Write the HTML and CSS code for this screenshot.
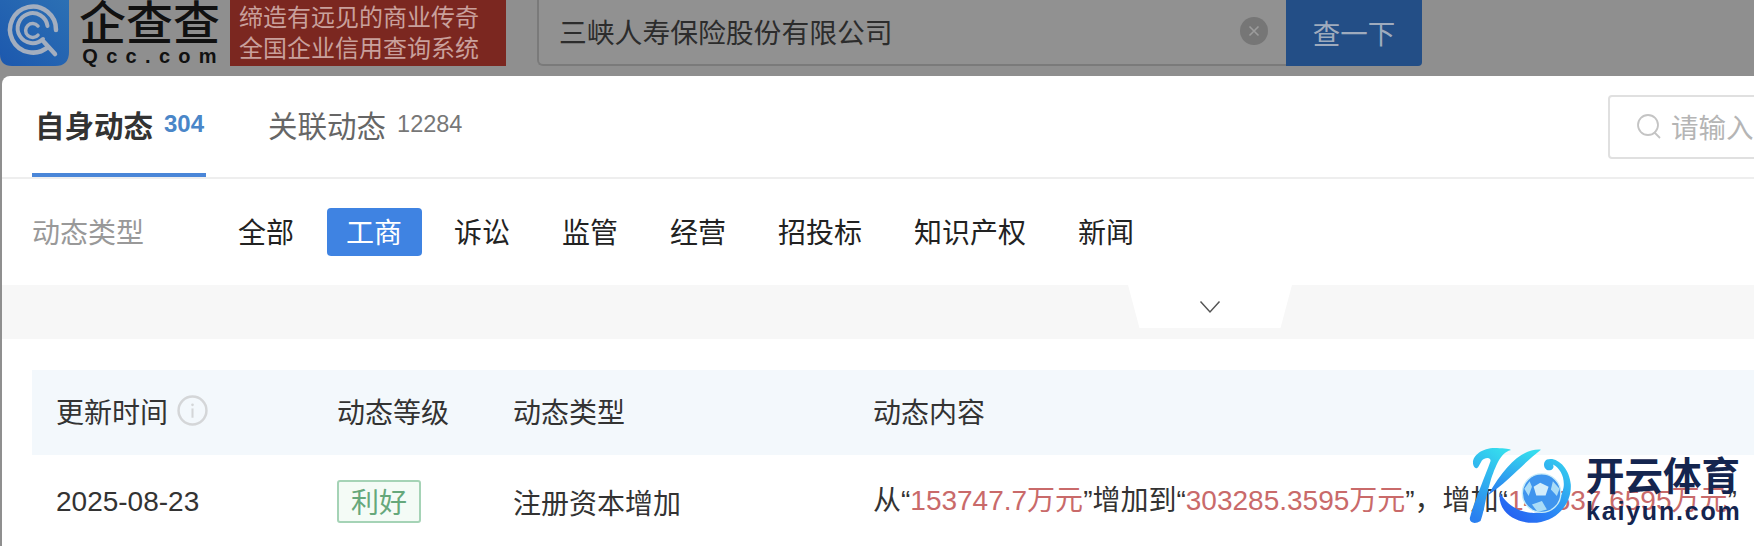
FILE: index.html
```html
<!DOCTYPE html>
<html lang="zh-CN">
<head>
<meta charset="utf-8">
<title>三峡人寿保险股份有限公司</title>
<link rel="stylesheet" href="styles.css">
</head>
<body>
<header class="topbar">
  <svg class="logo-icon" viewBox="0 0 69 66" aria-hidden="true">
    <defs><linearGradient id="lg" x1="0" y1="1" x2="1" y2="0"><stop offset="0" stop-color="#1c58ae"/><stop offset="1" stop-color="#2c70b4"/></linearGradient></defs>
    <path d="M0 0H69V52Q69 66 55 66H12Q0 66 0 54Z" fill="url(#lg)"/>
    <g fill="none" stroke="#a3aebf" stroke-linecap="round">
      <path d="M48 47A23 23 0 1 1 56 30" stroke-width="4.5"/>
      <path d="M43 39A15 15 0 1 1 47.500 26" stroke-width="4"/>
      <path d="M38 26A7 7 0 1 0 38 35" stroke-width="3.500"/>
      <path d="M44 42L55 54" stroke-width="4.500"/>
    </g>
  </svg>
  <div class="logo-text">
    <span class="logo-cn">企查查</span>
    <span class="logo-en">Qcc.com</span>
  </div>
  <div class="banner">
    <span>缔造有远见的商业传奇</span>
    <span>全国企业信用查询系统</span>
  </div>
  <div class="search-input">
    <span class="search-value">三峡人寿保险股份有限公司</span>
    <svg class="clear-icon" viewBox="0 0 28 28" aria-hidden="true">
      <circle cx="14" cy="14" r="14" fill="#767676"/>
      <path d="M9.500 9.500L18.500 18.500M18.500 9.500L9.500 18.500" stroke="#9c9c9c" stroke-width="1.600"/>
    </svg>
  </div>
  <button class="search-btn">查一下</button>
</header>

<main class="modal">
  <nav class="tabs">
    <div class="tab tab-active">自身动态<span class="tab-count">304</span></div>
    <div class="tab tab-other">关联动态<span class="tab-count">12284</span></div>
    <div class="tab-search">
      <svg class="tab-search-icon" viewBox="0 0 26 26" aria-hidden="true">
        <circle cx="12" cy="12" r="10" fill="none" stroke="#c4c4c4" stroke-width="1.800"/>
        <path d="M18 19L24 25" stroke="#c4c4c4" stroke-width="1.800"/>
      </svg>
      <span>请输入</span>
    </div>
  </nav>

  <section class="filters">
    <span class="filter-label">动态类型</span>
    <div class="filter-list">
      <span class="filter-item">全部</span>
      <span class="filter-item filter-active">工商</span>
      <span class="filter-item">诉讼</span>
      <span class="filter-item">监管</span>
      <span class="filter-item">经营</span>
      <span class="filter-item">招投标</span>
      <span class="filter-item">知识产权</span>
      <span class="filter-item">新闻</span>
    </div>
  </section>

  <div class="band">
    <div class="notch">
      <svg class="chevron" viewBox="0 0 22 14" aria-hidden="true"><path d="M1.500 1.500L11 12L20.500 1.500" fill="none" stroke="#555" stroke-width="1.500"/></svg>
    </div>
  </div>

  <section class="table">
    <div class="cell head">更新时间
      <svg class="info-icon" viewBox="0 0 30 30" aria-hidden="true">
        <circle cx="15" cy="15" r="13.500" fill="none" stroke="#d4d6d8" stroke-width="2.400"/>
        <circle cx="15" cy="9.500" r="1.300" fill="#d4d6d8"/>
        <path d="M15 13V22" stroke="#d4d6d8" stroke-width="2"/>
      </svg>
    </div>
    <div class="cell head">动态等级</div>
    <div class="cell head">动态类型</div>
    <div class="cell head">动态内容</div>
    <div class="cell">2025-08-23</div>
    <div class="cell"><span class="tag">利好</span></div>
    <div class="cell">注册资本增加</div>
    <div class="cell cell-nowrap">从“<span class="red">153747.7万元</span>”增加到“<span class="red">303285.3595万元</span>”，增加“<span class="red">149537.6595万元</span>”</div>
  </section>
</main>

<aside class="watermark">
  <svg class="wm-k" viewBox="200 130 330 250" aria-hidden="true">
    <defs>
      <linearGradient id="k1" x1="0.7" y1="0" x2="0.3" y2="1"><stop offset="0" stop-color="#35dcee"/><stop offset="1" stop-color="#2a80f0"/></linearGradient>
      <linearGradient id="k2" x1="1" y1="0" x2="0" y2="1"><stop offset="0" stop-color="#35d6ee"/><stop offset="0.6" stop-color="#2a80f5"/><stop offset="1" stop-color="#2456f0"/></linearGradient>
    </defs>
    <path d="M218 195C212 170 245 142 290 145C315 146 335 148 330 152C300 160 285 200 270 245C255 295 250 340 240 365C225 375 205 372 208 355C220 310 250 240 270 185C272 175 262 172 250 178C240 183 238 200 230 205C224 208 220 203 218 195Z" fill="url(#k1)"/>
    <path d="M422 150C370 146 318 190 262 288C325 245 370 190 422 150Z" fill="url(#k1)"/>
    <path d="M298 280C290 340 350 375 410 370C475 362 515 310 512 255C508 205 470 170 440 180C425 188 430 215 450 212C460 210 462 200 458 195C480 205 495 235 490 265C482 310 440 345 390 340C350 336 320 315 298 280Z" fill="url(#k2)"/>
    <circle cx="424" cy="281" r="58" fill="#3f95ee" stroke="#c8ecf8" stroke-width="4"/>
    <path d="M420 250L445 262L436 288L408 288L400 262Z" fill="#d3edfb"/>
    <path d="M372 268L388 245L395 262L385 290Z M458 245L478 268L470 290L452 270Z M395 315L425 305L440 330L412 338Z" fill="#a9dcf7"/>
  </svg>
  <div class="wm-text">
    <span class="wm-cn">开云体育</span>
    <span class="wm-en">kaiyun.com</span>
  </div>
</aside>
</body>
</html>
```
FILE: styles.css
```css
* { box-sizing: border-box; }
html, body { margin: 0; height: 546px; overflow: hidden; }
body {
  position: relative;
  background: #8f8f8f;
  font-family: "Liberation Sans", "Noto Sans CJK SC", sans-serif;
  color: #333;
}
.topbar { display: flex; align-items: flex-start; height: 76px; }
.logo-icon { width: 69px; height: 66px; flex: none; }
.logo-text {
  display: flex; flex-direction: column; align-items: center;
  width: 143px; margin-left: 9px; color: #111;
}
.logo-cn { font-size: 47px; line-height: 47px; font-weight: 500; white-space: nowrap; }
.logo-en { font-size: 20px; line-height: 18px; font-weight: 700; letter-spacing: 8.3px; margin-right: -8.3px; white-space: nowrap; }
.banner {
  display: flex; flex-direction: column; justify-content: center;
  width: 276px; height: 66px; margin-left: 9px; padding-left: 9px;
  background: #7b2720; color: #c9a09c; font-size: 24px; line-height: 31px; white-space: nowrap;
}
.search-input {
  display: flex; align-items: center; justify-content: space-between;
  width: 749px; height: 66px; margin-left: 31px; padding: 0 18px 2px 20px;
  border: 2px solid #7a7a7a; border-top: 0; border-right: 0; border-radius: 0 0 0 6px;
  background: #919191;
}
.search-value { font-size: 27.8px; color: #2c2c2c; white-space: nowrap; }
.clear-icon { width: 28px; height: 28px; flex: none; }
.search-btn {
  width: 136px; height: 66px; padding: 0 0 2px; border: 0; border-radius: 0 0 4px 0;
  background: #234e86; color: #9fabbd; font: inherit; font-size: 27.5px;
}

.modal {
  width: 1752px; height: 470px; margin-left: 2px; overflow: hidden;
  background: #fff; border-radius: 8px 0 0 0;
}
.tabs {
  display: flex; align-items: stretch; height: 103px; padding-left: 30px;
  border-bottom: 2px solid #eeeeee;
}
.tab {
  display: flex; align-items: center; padding: 0 2px 1px 3px;
  font-size: 29.5px; white-space: nowrap; border-bottom: 4px solid transparent;
}
.tab-active { color: #333; font-weight: 700; border-bottom-color: #4a86d8; }
.tab-other { margin-left: 59px; color: #666; }
.tab-count { margin-left: 11px; font-size: 23.5px; font-weight: 400; color: #777; }
.tab-active .tab-count { font-size: 24px; font-weight: 700; color: #4a86c8; }
.tab-search {
  display: flex; align-items: center; flex: none; gap: 9px;
  width: 300px; height: 64px; margin: 19px -154px 0 auto; padding: 0 0 2px 26px;
  border: 2px solid #e0e0e0; border-radius: 4px;
  font-size: 27.5px; color: #b5b5b5;
}
.tab-search-icon { width: 26px; height: 26px; flex: none; }

.filters { display: flex; align-items: center; height: 106px; padding-left: 30px; }
.filter-label { width: 186.5px; padding-bottom: 2px; font-size: 28px; color: #999; white-space: nowrap; }
.filter-list { display: flex; gap: 13px; }
.filter-item {
  display: flex; align-items: center; height: 48px; padding: 0 19.5px 2px;
  border-radius: 4px; font-size: 28px; color: #222; white-space: nowrap;
}
.filter-active { background: #3f83e2; color: #fff; }

.band { height: 54px; margin-bottom: 31px; background: #f7f7f7; }
.notch {
  display: flex; align-items: center; justify-content: center;
  width: 164px; height: 43px; margin-left: 1126px;
  background: #fff;
  clip-path: polygon(0 0, 100% 0, 93% 100%, 7% 100%);
}
.chevron { width: 22px; height: 14px; }

.table {
  display: grid; grid-template-columns: 281px 176px 360px 1fr;
  grid-template-rows: 85px 94px; margin-left: 30px;
}
.cell {
  display: flex; align-items: center; padding-left: 24px;
  font-size: 28px; color: #333; white-space: nowrap;
}
.head { background: #f3f8fc; padding-bottom: 4px; }
.info-icon { width: 31px; height: 31px; margin-left: 9px; flex: none; }
.tag {
  display: flex; align-items: center; justify-content: center;
  width: 84px; height: 43px; margin-top: -1px; padding-bottom: 2px; border: 2px solid #a5d3b6; border-radius: 3px;
  background: #f4fbf6; color: #66a87b;
}
.cell-nowrap { display: block; line-height: 92px; }
.red { color: #c96a6a; }

.watermark {
  position: absolute; left: 1467px; top: 443px;
  display: flex; align-items: flex-start; gap: 9px;
}
.wm-k { width: 110px; height: 83px; flex: none; }
.wm-text { display: flex; flex-direction: column; width: 155px; padding-top: 12px; color: #14254f; }
.wm-cn { font-size: 38.5px; line-height: 44px; font-weight: 700; white-space: nowrap; }
.wm-en { font-size: 25px; line-height: 24px; font-weight: 700; letter-spacing: 1.8px; white-space: nowrap; }
```
